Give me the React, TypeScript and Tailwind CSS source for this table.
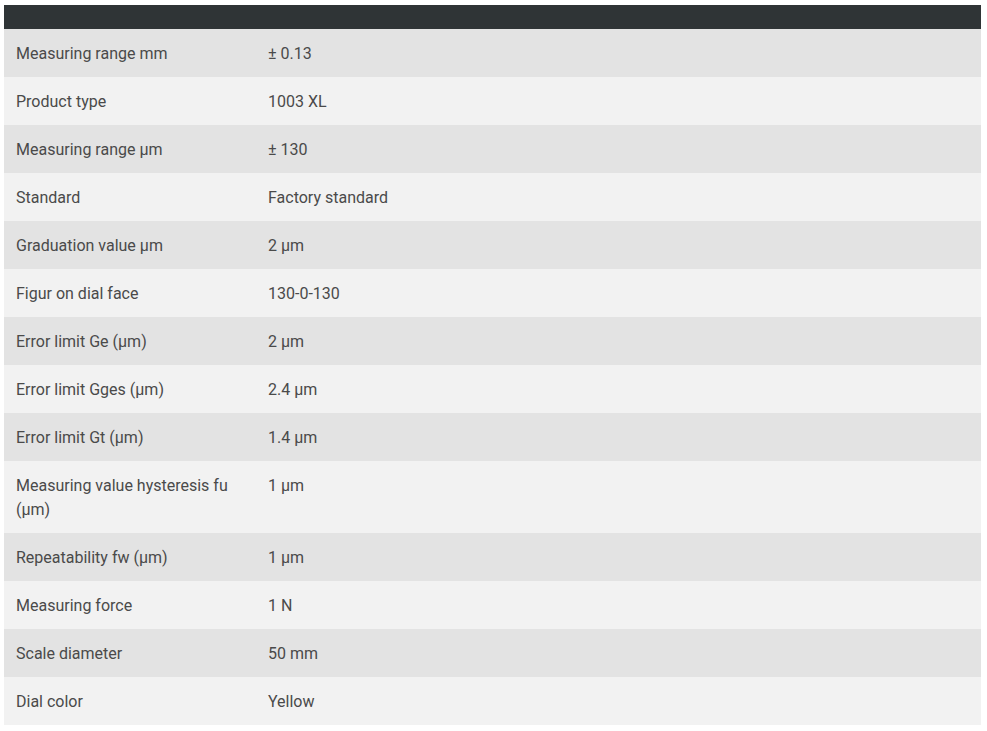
const rows: [string, string][] = [
  ['Measuring range mm', '± 0.13'],
  ['Product type', '1003 XL'],
  ['Measuring range µm', '± 130'],
  ['Standard', 'Factory standard'],
  ['Graduation value µm', '2 µm'],
  ['Figur on dial face', '130-0-130'],
  ['Error limit Ge (µm)', '2 µm'],
  ['Error limit Gges (µm)', '2.4 µm'],
  ['Error limit Gt (µm)', '1.4 µm'],
  ['Measuring value hysteresis fu (µm)', '1 µm'],
  ['Repeatability fw (µm)', '1 µm'],
  ['Measuring force', '1 N'],
  ['Scale diameter', '50 mm'],
  ['Dial color', 'Yellow'],
];

export default function App() {
  return (
    <div className="min-h-[731px] bg-white pt-[5px] pl-[4px] pr-[6px]" style={{ fontFamily: 'Roboto, "Liberation Sans", sans-serif' }}>
      <table className="w-full border-collapse text-[16px] leading-6 font-normal text-[#4a4a4a]">
        <thead>
          <tr className="h-[24px] bg-[#2f3436]">
            <th className="w-[252px]"></th>
            <th></th>
          </tr>
        </thead>
        <tbody>
          {rows.map(([label, value], i) => (
            <tr key={label} className={i % 2 === 0 ? 'bg-[#e3e3e3]' : 'bg-[#f2f2f2]'}>
              <td className="w-[252px] px-3 pt-[13px] pb-[11px] align-top">{label}</td>
              <td className="px-3 pt-[13px] pb-[11px] align-top">{value}</td>
            </tr>
          ))}
        </tbody>
      </table>
    </div>
  );
}
